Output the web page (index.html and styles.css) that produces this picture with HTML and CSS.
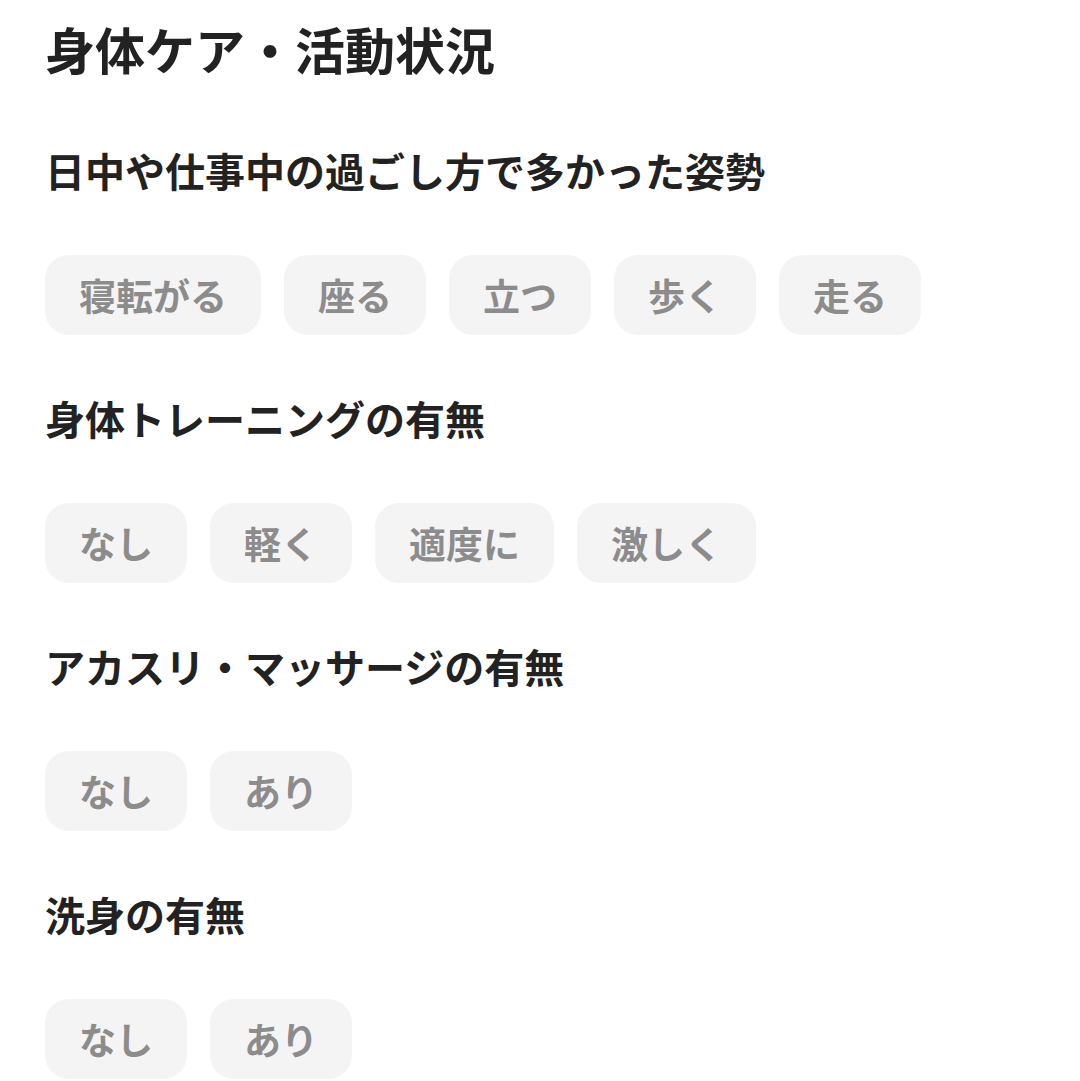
FILE: index.html
```html
<!DOCTYPE html>
<html lang="ja">
<head>
    <meta charset="utf-8">
    <title>身体ケア・活動状況</title>
    <link rel="stylesheet" href="styles.css">
</head>
<body>
    <div class="page">
        <h1 class="title">身体ケア・活動状況</h1>

        <div class="section">
            <h2 class="question">日中や仕事中の過ごし方で多かった姿勢</h2>
            <div class="chips">
                <span class="chip">寝転がる</span>
                <span class="chip">座る</span>
                <span class="chip">立つ</span>
                <span class="chip">歩く</span>
                <span class="chip">走る</span>
            </div>
        </div>

        <div class="section">
            <h2 class="question">身体トレーニングの有無</h2>
            <div class="chips">
                <span class="chip">なし</span>
                <span class="chip">軽く</span>
                <span class="chip">適度に</span>
                <span class="chip">激しく</span>
            </div>
        </div>

        <div class="section">
            <h2 class="question">アカスリ・マッサージの有無</h2>
            <div class="chips">
                <span class="chip">なし</span>
                <span class="chip">あり</span>
            </div>
        </div>

        <div class="section">
            <h2 class="question">洗身の有無</h2>
            <div class="chips">
                <span class="chip">なし</span>
                <span class="chip">あり</span>
            </div>
        </div>
    </div>
</body>
</html>
```

FILE: styles.css
```css
body {
    margin: 0;
    background-color: #fff;
    color: #222;
    font-family: "Noto Sans CJK JP", "Noto Sans", sans-serif;
}
.page {
    padding: 10px 45px 0;
}
.title {
    margin: 0;
    font-size: 50px;
    line-height: 76px;
    font-weight: 700;
}
.section {
    margin-top: 54px;
}
.section + .section {
    margin-top: 53px;
}
.question {
    margin: 0 0 55px;
    font-size: 40px;
    line-height: 60px;
    font-weight: 700;
}
.chips {
    display: flex;
    flex-wrap: wrap;
    gap: 23px;
}
.chip {
    display: flex;
    align-items: center;
    height: 80px;
    padding: 0 34px;
    border-radius: 24px;
    background-color: #f4f4f4;
    color: #8c8c8c;
    font-size: 37px;
    font-weight: 700;
}
```
